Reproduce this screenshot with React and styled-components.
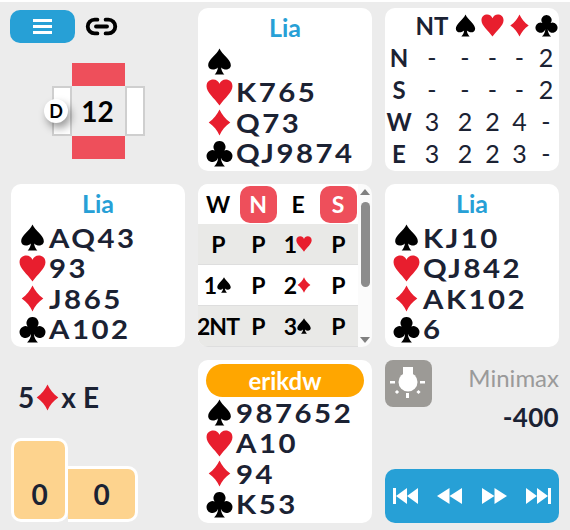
import React from "react";
import styled, { createGlobalStyle } from "styled-components";
import { Link2 } from "lucide-react";

const GlobalStyle = createGlobalStyle`
  html, body {
    margin: 0;
    padding: 0;
    background: #fff;
  }
  body {
    font-family: "Lato", "Liberation Sans", sans-serif;
    color: #1b2233;
  }
`;

const RED = "#e81e2e";
const BLUE = "#27a0d6";

const Board = styled.div`
  margin-top: 2px;
  width: 570px;
  height: 528px;
  box-sizing: border-box;
  padding: 6px 11px 5px 11px;
  background: #ececec;
  display: grid;
  grid-template-columns: 174px 174px 174px;
  grid-template-rows: 163px 163px 163px;
  gap: 13px;
`;
const Card = styled.div`
  background: #fff;
  border-radius: 10px;
  overflow: hidden;
`;
const TopLeft = styled.div`
  display: flex;
  flex-direction: column;
`;
const Toolbar = styled.div`
  display: flex;
  align-items: center;
  gap: 10px;
  margin-top: 2px;
  margin-left: -1px;
`;
const MenuButton = styled.div`
  width: 65px;
  height: 33px;
  border-radius: 10px;
  background: ${BLUE};
  display: flex;
  flex-direction: column;
  align-items: center;
  justify-content: center;
  gap: 3px;
`;
const MenuBar = styled.div`
  width: 19px;
  height: 3px;
  background: #fff;
`;
const Vul = styled.div`
  position: relative;
  margin: 20px 0 0 41px;
  display: grid;
  grid-template-columns: 20px 53px 20px;
  grid-template-rows: 23px 50px 23px;
  width: 93px;
`;
const VulBar = styled.div`
  grid-column: 2;
  background: #ee4f5b;
`;
const VulSide = styled.div`
  grid-row: 2;
  background: #fff;
  border: 2px solid #cfcfcf;
  box-sizing: border-box;
`;
const VulCenter = styled.div`
  grid-row: 2;
  grid-column: 2;
  display: flex;
  align-items: center;
  justify-content: center;
  padding-right: 2px;
  font-size: 28px;
  font-weight: 700;
  color: #000;
`;
const Dealer = styled.div`
  position: absolute;
  left: -8px;
  top: 36px;
  width: 24px;
  height: 24px;
  border-radius: 50%;
  background: #fff;
  color: #000;
  font-size: 18px;
  font-weight: 700;
  display: flex;
  align-items: center;
  justify-content: center;
  box-shadow: 3px 5px 8px rgba(0, 0, 0, 0.4);
`;

const Hand = styled(Card)`
  padding: 4px 8px 0 8px;
`;
const PlayerName = styled.div`
  height: 32px;
  line-height: 27px;
  margin-top: 2px;
  text-align: center;
  font-size: 25px;
  font-weight: 700;
  color: ${BLUE};
`;
const PlayerBadge = styled.div`
  height: 33px;
  border-radius: 17px;
  background: #ffa600;
  color: #fff;
  text-align: center;
  line-height: 33px;
  font-size: 24px;
  font-weight: 700;
`;
const SuitRow = styled.div`
  display: flex;
  align-items: center;
  height: 30.5px;
  padding-top: 1px;
  box-sizing: border-box;
`;
const SuitSlot = styled.span`
  width: 30px;
  flex: none;
  display: flex;
  justify-content: flex-start;
`;
const CardText = styled.span`
  display: inline-block;
  font-size: 26px;
  font-weight: 700;
  letter-spacing: 2.2px;
  transform: scaleX(1.13);
  transform-origin: left center;
`;
const SuitIcon = styled.svg`
  display: inline-block;
  flex: none;
`;

const Tricks = styled(Card)`
  display: grid;
  grid-template-columns: 28px 38px 28px 27px 27px 26px;
  grid-auto-rows: 32px;
  padding-top: 1px;
  font-size: 25px;
  text-align: center;
  align-items: center;
  justify-items: center;
`;
const TrickHead = styled.div`
  font-weight: 700;
  font-size: 24px;
`;

const Auction = styled(Card)`
  display: flex;
  color: #000;
  font-size: 23px;
  font-weight: 700;
  background: #fbfbfb;
`;
const AuctionBody = styled.div`
  width: 160px;
  flex: none;
`;
const AuctionRow = styled.div`
  display: grid;
  grid-template-columns: repeat(4, 40px);
  height: ${(p) => (p.$head ? 40 : 41)}px;
  box-sizing: border-box;
  align-items: center;
  justify-items: center;
  background: ${(p) => (p.$shade ? "#e9e9e7" : "#fff")};
  border-bottom: ${(p) => (p.$head ? "none" : "1px solid #dedede")};
`;
const Seat = styled.div`
  width: 37px;
  height: 37px;
  border-radius: 10px;
  display: flex;
  align-items: center;
  justify-content: center;
  background: ${(p) => (p.$vul ? "#ee4f5b" : "transparent")};
  color: ${(p) => (p.$vul ? "#fff" : "#000")};
`;
const Bid = styled.div`
  white-space: nowrap;
  display: flex;
  align-items: center;
  letter-spacing: -0.9px;
`;
const ScrollTrack = styled.div`
  flex: 1;
  display: flex;
  flex-direction: column;
  align-items: center;
  padding: 5px 0 4px 0;
`;
const ScrollArrow = styled.div`
  width: 0;
  height: 0;
  border-left: 5px solid transparent;
  border-right: 5px solid transparent;
  border-bottom: ${(p) => (p.$down ? "none" : "6px solid #808080")};
  border-top: ${(p) => (p.$down ? "6px solid #808080" : "none")};
`;
const ScrollThumb = styled.div`
  width: 9px;
  height: 85px;
  margin: 7px 0 auto 0;
  border-radius: 5px;
  background: #8c8c8c;
`;

const ScoreCell = styled.div`
  display: flex;
  flex-direction: column;
`;
const Contract = styled.div`
  margin: 22px 0 0 7px;
  height: 30px;
  display: flex;
  align-items: center;
  font-size: 28px;
  font-weight: 700;
`;
const ContractEast = styled.span`
  margin-left: 7px;
`;
const TrickBoxes = styled.div`
  margin-top: 26px;
  display: flex;
  align-items: flex-end;
`;
const TrickBox = styled.div`
  position: relative;
  z-index: ${(p) => (p.$joined ? 0 : 1)};
  box-sizing: border-box;
  width: ${(p) => p.$w}px;
  height: ${(p) => p.$h}px;
  background: #fdd38e;
  border: 3px solid #fff;
  border-left-width: ${(p) => (p.$joined ? 0 : 3)}px;
  border-radius: ${(p) => (p.$joined ? "0 10px 10px 0" : "10px")};
  display: flex;
  align-items: flex-end;
  justify-content: center;
  padding-bottom: 10px;
  font-size: 28px;
  font-weight: 700;
  line-height: 30px;
`;

const RightCell = styled.div`
  display: flex;
  flex-direction: column;
`;
const ScoreTop = styled.div`
  display: flex;
  justify-content: space-between;
  align-items: flex-start;
`;
const HintButton = styled.div`
  width: 47px;
  height: 47px;
  border-radius: 8px;
  background: #9c9a96;
  display: flex;
  align-items: center;
  justify-content: center;
`;
const Minimax = styled.div`
  font-size: 24px;
  color: #9a9a9a;
  line-height: 36px;
`;
const ScoreValue = styled.div`
  text-align: right;
  font-size: 26px;
  letter-spacing: 0.3px;
  font-weight: 700;
  line-height: 30px;
  margin-top: -5px;
`;
const NavBar = styled.div`
  margin-top: 37px;
  height: 54px;
  border-radius: 10px;
  background: ${BLUE};
  display: grid;
  grid-template-columns: repeat(4, 44.5px);
  justify-content: center;
  align-items: center;
  justify-items: center;
  overflow: hidden;
`;

const SUIT_PATHS = {
  spade: "M50 2C60 25 92 42 92 64C92 80 70 86 56 72C57 84 62 92 68 98L32 98C38 92 43 84 44 72C30 86 8 80 8 64C8 42 40 25 50 2Z",
  heart: "M50 98C30 70 2 50 2 27C2 10 14 2 27 2C38 2 46 9 50 18C54 9 62 2 73 2C86 2 98 10 98 27C98 50 70 70 50 98Z",
  diamond: "M50 2C58 20 72 38 90 50C72 62 58 80 50 98C42 80 28 62 10 50C28 38 42 20 50 2Z",
  club: "M50 4A22 22 0 0 1 68 39A22 22 0 1 1 55 66C56 80 62 90 70 98L30 98C38 90 44 80 45 66A22 22 0 1 1 32 39A22 22 0 0 1 50 4Z",
};

function Suit({ name, size = 27 }) {
  const red = name === "heart" || name === "diamond";
  return (
    <SuitIcon width={size} height={size} viewBox="0 0 100 100">
      <path d={SUIT_PATHS[name]} fill={red ? RED : "#000"} />
    </SuitIcon>
  );
}

const SUIT_ORDER = ["spade", "heart", "diamond", "club"];

function HandCard({ name, badge, cards }) {
  return (
    <Hand>
      {badge ? <PlayerBadge>{name}</PlayerBadge> : <PlayerName>{name}</PlayerName>}
      {SUIT_ORDER.map((s, i) => (
        <SuitRow key={s}>
          <SuitSlot>
            <Suit name={s} />
          </SuitSlot>
          <CardText>{cards[i]}</CardText>
        </SuitRow>
      ))}
    </Hand>
  );
}

const trickRows = [
  ["N", "-", "-", "-", "-", "2"],
  ["S", "-", "-", "-", "-", "2"],
  ["W", "3", "2", "2", "4", "-"],
  ["E", "3", "2", "2", "3", "-"],
];

const auction = [
  ["P", "P", ["1", "heart"], "P"],
  [["1", "spade"], "P", ["2", "diamond"], "P"],
  ["2NT", "P", ["3", "spade"], "P"],
];

function NavIcon({ dir, end }) {
  // drawn pointing left, mirrored for the forward buttons
  const first = end ? "3,8 14,0 14,16" : "0,8 12.5,0 12.5,16";
  const second = end ? "14,8 25,0 25,16" : "12.5,8 25,0 25,16";
  return (
    <svg width="25" height="16" viewBox="0 0 25 16">
      <g transform={dir > 0 ? "translate(25 0) scale(-1 1)" : undefined} fill="#fff">
        <polygon points={first} />
        <polygon points={second} />
        {end && <rect x="0" y="0" width="3" height="16" />}
      </g>
    </svg>
  );
}

function Bulb() {
  return (
    <svg width="37" height="37" viewBox="0 0 37 37">
      <rect x="13" y="2" width="10" height="10" fill="#fff" />
      <circle cx="18" cy="17" r="9.5" fill="#fff" />
      <rect x="0" y="16" width="5" height="2.5" fill="#fff" />
      <rect x="30" y="16" width="5" height="2.5" fill="#fff" />
      <rect x="16" y="28" width="3" height="5" fill="#fff" />
      <rect x="5.5" y="25.5" width="3" height="3" fill="#fff" transform="rotate(45 7 27)" />
      <rect x="27" y="25.5" width="3" height="3" fill="#fff" transform="rotate(45 28.5 27)" />
    </svg>
  );
}

export default function App() {
  return (
    <>
      <GlobalStyle />
      <Board>
        <TopLeft>
          <Toolbar>
            <MenuButton>
              <MenuBar />
              <MenuBar />
              <MenuBar />
            </MenuButton>
            <Link2 size={33} strokeWidth={2.8} color="#000" />
          </Toolbar>
          <Vul>
            <VulBar />
            <span />
            <span />
            <VulSide />
            <VulCenter>12</VulCenter>
            <VulSide />
            <VulBar />
            <Dealer>D</Dealer>
          </Vul>
        </TopLeft>

        <HandCard name="Lia" cards={["", "K765", "Q73", "QJ9874"]} />

        <Tricks>
          <span />
          <TrickHead>NT</TrickHead>
          <Suit name="spade" size={23} />
          <Suit name="heart" size={23} />
          <Suit name="diamond" size={23} />
          <Suit name="club" size={23} />
          {trickRows.map((r) =>
            r.map((v, i) =>
              i === 0 ? (
                <TrickHead key={r[0] + i}>{v}</TrickHead>
              ) : (
                <div key={r[0] + i}>{v}</div>
              )
            )
          )}
        </Tricks>

        <HandCard name="Lia" cards={["AQ43", "93", "J865", "A102"]} />

        <Auction>
          <AuctionBody>
            <AuctionRow $head>
              <Seat>W</Seat>
              <Seat $vul>N</Seat>
              <Seat>E</Seat>
              <Seat $vul>S</Seat>
            </AuctionRow>
            {auction.map((row, i) => (
              <AuctionRow key={i} $shade={i % 2 === 0}>
                {row.map((b, j) =>
                  Array.isArray(b) ? (
                    <Bid key={j}>
                      {b[0]}
                      <Suit name={b[1]} size={16} />
                    </Bid>
                  ) : (
                    <Bid key={j}>{b}</Bid>
                  )
                )}
              </AuctionRow>
            ))}
          </AuctionBody>
          <ScrollTrack>
            <ScrollArrow />
            <ScrollThumb />
            <ScrollArrow $down />
          </ScrollTrack>
        </Auction>

        <HandCard name="Lia" cards={["KJ10", "QJ842", "AK102", "6"]} />

        <ScoreCell>
          <Contract>
            5
            <Suit name="diamond" size={27} />
            x<ContractEast>E</ContractEast>
          </Contract>
          <TrickBoxes>
            <TrickBox $w={57} $h={84}>0</TrickBox>
            <TrickBox $w={70} $h={56} $joined>0</TrickBox>
          </TrickBoxes>
        </ScoreCell>

        <HandCard name="erikdw" badge cards={["987652", "A10", "94", "K53"]} />

        <RightCell>
          <ScoreTop>
            <HintButton>
              <Bulb />
            </HintButton>
            <Minimax>Minimax</Minimax>
          </ScoreTop>
          <ScoreValue>-400</ScoreValue>
          <NavBar>
            <NavIcon dir={-1} end />
            <NavIcon dir={-1} />
            <NavIcon dir={1} />
            <NavIcon dir={1} end />
          </NavBar>
        </RightCell>
      </Board>
    </>
  );
}
